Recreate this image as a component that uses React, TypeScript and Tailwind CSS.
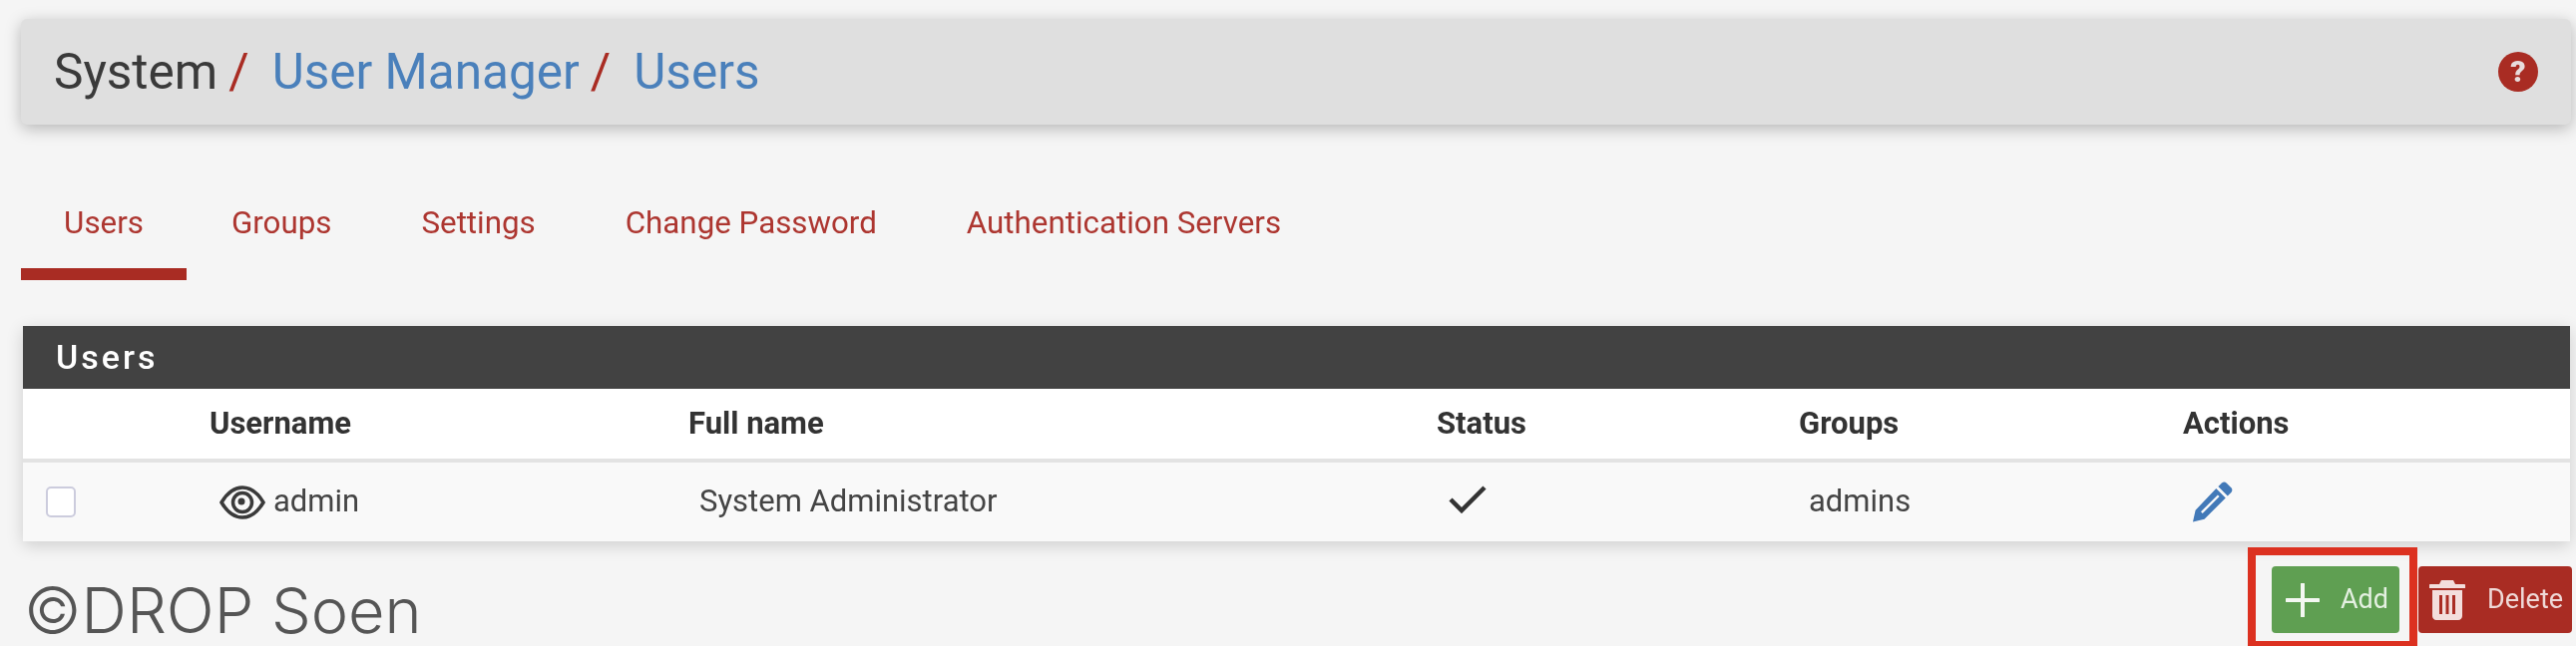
function EyeIcon() {
  return (
    <svg width="46" height="36" viewBox="0 0 46 36" fill="none" stroke="#3a3a3a" className="mr-[8px] shrink-0">
      <path d="M2 18C8 8 15 3 23 3s15 5 21 15c-6 10-13 15-21 15S8 28 2 18Z" strokeWidth="3.5" />
      <circle cx="23" cy="18" r="9.5" strokeWidth="3.5" />
      <circle cx="22" cy="17" r="3.5" fill="#3a3a3a" stroke="none" />
    </svg>
  );
}

function PencilIcon() {
  return (
    <svg width="41" height="41" viewBox="0 0 41 41" fill="#4279b8">
      <path d="M30 1.5c1.500-1.200 3.300-1.200 4.600 0l4.800 4.800c1.300 1.400 1.300 3.200 0 4.600l-3.600 3.600-9.400-9.400Z" />
      <path d="M24.300 7 33.800 16.500 12.500 37.800 1 40.500l2.600-11.800Zm1.600 6.400L9 30.300l1.700 1.700 16.900-16.900Z" fillRule="evenodd" />
    </svg>
  );
}

function TrashIcon() {
  return (
    <svg width="36" height="40" viewBox="0 0 36 40" fill="#f3dedc">
      <path d="M12 0h12l2 4h9c.6 0 1 .4 1 1v3H0V5c0-.6.4-1 1-1h9Z" />
      <path
        d="M3 10h30v26c0 2.200-1.800 4-4 4H7c-2.200 0-4-1.800-4-4Zm7 5v19h3V15Zm6.500 0v19h3V15Zm6.500 0v19h3V15Z"
        fillRule="evenodd"
      />
    </svg>
  );
}

const tabs = ["Users", "Groups", "Settings", "Change Password", "Authentication Servers"];

export default function App() {
  return (
    <div className="w-[2582px] h-[648px] overflow-hidden bg-[#f5f5f5] font-['Roboto',sans-serif] pt-[19px] pl-[21px] pr-[5px]">
      <div className="h-[106px] flex items-center justify-between rounded-[6px] bg-[#dfdfdf] pl-[33px] pr-[33px] shadow-[0_4px_16px_rgba(0,0,0,0.26)]">
        <h1 className="text-[49.500px] leading-none text-[#3a3a3a] flex pt-[2px] blur-[0.6px]">
          System
          <span className="text-[#a92c23] ml-[11px] mr-[23px]">/</span>
          <span className="text-[#4a80bb]">User Manager</span>
          <span className="text-[#a92c23] ml-[11px] mr-[23px]">/</span>
          <span className="text-[#4a80bb]">Users</span>
        </h1>
        <div className="w-[40px] h-[40px] rounded-full bg-[#a92c23] flex items-center justify-center text-[#e8dcdc] text-[30px] font-black leading-none blur-[0.6px]">
          ?
        </div>
      </div>

      <div className="flex mt-[66px] h-[90px] text-[#ad3630] text-[31.300px]">
        {tabs.map((tab, i) => (
          <div
            key={tab}
            className={
              i === 0
                ? "w-[166px] flex justify-center pt-[10px] border-b-[12px] border-[#a92c23]"
                : "px-[45px] pt-[10px]"
            }
          >
            <span className="blur-[0.6px]">{tab}</span>
          </div>
        ))}
      </div>

      <div className="mt-[46px] ml-[2px] mr-[1px] shadow-[0_4px_16px_rgba(0,0,0,0.16)]">
        <div className="h-[63px] bg-[#424242] text-white text-[34px] font-medium tracking-[3px] pl-[33px] flex items-center">
          <span className="blur-[0.6px]">Users</span>
        </div>
        <div className="h-[74px] bg-white border-b-[4px] border-[#e3e3e3] grid grid-cols-[187px_480px_750px_363px_385px_1fr] items-center text-[#333] text-[31px] font-bold">
          <div />
          <div className="blur-[0.6px]">Username</div>
          <div className="blur-[0.6px]">Full name</div>
          <div className="blur-[0.6px]">Status</div>
          <div className="blur-[0.6px]">Groups</div>
          <div className="blur-[0.6px]">Actions</div>
        </div>
        <div className="h-[79px] bg-[#f9f9f9] grid grid-cols-[197px_481px_750px_362px_384px_1fr] items-center text-[#444] text-[31px]">
          <div className="pl-[23px]">
            <div className="w-[30px] h-[31px] rounded-[5px] border-2 border-[#ccd] bg-white" />
          </div>
          <div className="flex items-center blur-[0.6px]">
            <EyeIcon />
            admin
          </div>
          <div className="blur-[0.6px]">System Administrator</div>
          <div className="blur-[0.6px] pl-[1px] -mt-[5px]">
            <svg width="38" height="28" viewBox="0 0 38 28" fill="none" stroke="#333" strokeWidth="4.500" className="block">
              <path d="M2 14l11 11L36 2" />
            </svg>
          </div>
          <div className="blur-[0.6px]">admins</div>
          <div className="blur-[0.6px]">
            <PencilIcon />
          </div>
        </div>
      </div>

      <div className="flex items-start justify-between mt-[6px] -mr-[1px]">
        <div className="pl-[3px] pt-[32px] text-[63px] leading-none font-['Inter',sans-serif] font-light text-[#555]">
          ©DROP Soen
        </div>
        <div className="flex">
          <div className="w-[170px] h-[102px] border-[8px] border-[#dc3120] pt-[11px] pl-[16px]">
            <button className="w-[128px] h-[67px] rounded-[4px] bg-[#5f9f52] text-[#e4f0e1] text-[27px] flex items-center pl-[14px] blur-[0.5px]">
              <svg width="34" height="34" viewBox="0 0 34 34" stroke="#f4f8f2" strokeWidth="4" strokeLinecap="round" className="mr-[21px]">
                <path d="M17 1v32M1 17h32" />
              </svg>
              Add
            </button>
          </div>
          <button className="w-[154px] h-[67px] mt-[19px] ml-[1px] rounded-[4px] bg-[#a92c23] text-[#efd9d7] text-[27px] flex items-center pl-[11px] blur-[0.5px]">
            <TrashIcon />
            <span className="ml-[22px]">Delete</span>
          </button>
        </div>
      </div>
    </div>
  );
}
